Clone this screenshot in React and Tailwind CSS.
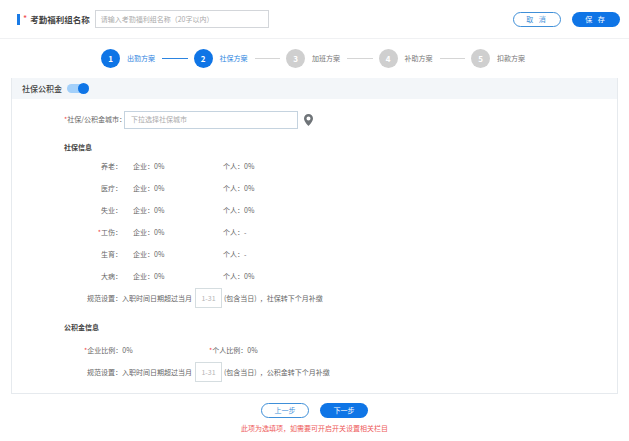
import React from 'react';

const font = { fontFamily: '"Noto Sans CJK SC", "Noto Sans", sans-serif' };

const steps = [
  { n: 1, label: '出勤方案', active: true, lineActive: true },
  { n: 2, label: '社保方案', active: true },
  { n: 3, label: '加班方案' },
  { n: 4, label: '补助方案' },
  { n: 5, label: '扣款方案' }
];

const rates = [
  { name: '养老', company: '0%', person: '0%' },
  { name: '医疗', company: '0%', person: '0%' },
  { name: '失业', company: '0%', person: '0%' },
  { name: '工伤', company: '0%', person: '-', required: true },
  { name: '生育', company: '0%', person: '-' },
  { name: '大病', company: '0%', person: '0%' }
];

function Rule({ tail }) {
  return (
    <div className="flex h-[22px] items-center pl-[75px] text-[7px] text-[#666]">
      <span className="w-[108px] whitespace-nowrap">规范设置：入职时间日期超过当月</span>
      <span className="flex h-[20px] w-[27px] items-center justify-center border border-[#d5dde0] text-[#b5b5b5]">1-31</span>
      <span className="ml-[2px] whitespace-nowrap">(包含当日)</span>
      <span className="ml-[3px] whitespace-nowrap">，{tail}</span>
    </div>
  );
}

export default function App() {
  return (
    <div style={font} className="h-[441px] w-[629px] overflow-hidden bg-white">
      {/* Top bar */}
      <div className="flex h-[39px] items-center border-b border-[#f0f1f3] pl-[17px] pr-[9px]">
        <span className="h-[11px] w-[3px] bg-[#1a7be6]"></span>
        <span className="ml-[3px] text-[9px] text-[#f04b4b]">*</span>
        <span className="ml-[3px] text-[8.5px] font-bold text-[#444]">考勤福利组名称</span>
        <div className="ml-[5px] flex h-[18px] w-[174px] items-center border border-[#d3d6da] pl-[5px] text-[7px] text-[#aaa]">
          请输入考勤福利组名称（20字以内）
        </div>
        <button className="ml-auto h-[15px] w-[48px] rounded-full border border-[#3f8fd8] text-[7px] tracking-[2px] text-[#3f8fd8]">取 消</button>
        <button className="ml-[11px] h-[15px] w-[48px] rounded-full bg-[#0f75e6] text-[7px] tracking-[2px] text-white">保 存</button>
      </div>

      {/* Stepper */}
      <div className="flex h-[39px] items-center pl-[101px]">
        {steps.map((s, i) => (
          <div key={s.n} className="flex items-center">
            <span className={`flex h-[19px] w-[19px] items-center justify-center rounded-full text-[8px] font-bold text-white ${s.active ? 'bg-[#0f75e6]' : 'bg-[#cfcfcf]'}`}>{s.n}</span>
            <span className={`ml-[7px] w-[29px] whitespace-nowrap text-[7px] ${s.active ? 'text-[#2c84e0]' : 'text-[#777]'}`}>{s.label}</span>
            {i < 4 && <span className={`mx-[6px] h-px w-[25.5px] ${s.lineActive ? 'bg-[#2c84e0]' : 'bg-[#d5d5d5]'}`}></span>}
          </div>
        ))}
      </div>

      {/* Panel */}
      <div className="mx-[11px] h-[316px] w-[607px] border border-t-0 border-[#e6eaee]">
        <div className="flex h-[21px] items-center bg-[#f3f6f9] pl-[10px]">
          <span className="text-[8px] font-medium text-[#444]">社保公积金</span>
          <span className="relative ml-[5px] h-[9px] w-[22px] rounded-full bg-[#a3d0fa]">
            <span className="absolute right-0 top-[-1px] h-[11px] w-[11px] rounded-full bg-[#0f75e6]"></span>
          </span>
        </div>

        <div className="flex h-[40px] items-center pt-[1px]">
          <span className="ml-[52px] w-[60px] whitespace-nowrap text-[7px] text-[#666]"><span className="text-[#f04b4b]">*</span>社保/公积金城市：</span>
          <div className="flex h-[18px] w-[174px] items-center border border-[#c5d3df] pl-[6px] text-[7px] text-[#aaa]">下拉选择社保城市</div>
          <svg className="ml-[6px]" width="9" height="12" viewBox="0 0 9 12">
            <path fillRule="evenodd" fill="#6f7478" d="M4.5 0A4.5 4.5 0 0 0 0 4.5C0 7.6 4.5 12 4.5 12S9 7.6 9 4.5A4.5 4.5 0 0 0 4.5 0Zm0 2.5a2 2 0 1 1 0 4 2 2 0 0 1 0-4Z" />
          </svg>
        </div>

        <div className="flex h-[16px] items-center pl-[52px] text-[7px] font-bold text-[#444]">社保信息</div>

        <div>
          {rates.map((r) => (
            <div key={r.name} className="flex h-[22px] items-center text-[7px] text-[#666]">
              <span className="w-[110px] text-right">
                {r.required && <span className="text-[#f04b4b]">*</span>}{r.name}：
              </span>
              <span className="ml-[11px] w-[90px]">企业：{r.company}</span>
              <span>个人：{r.person}</span>
            </div>
          ))}
        </div>

        <Rule tail="社保转下个月补缴" />

        <div className="flex h-[30px] items-center pl-[52px] pt-[6px] text-[7px] font-bold text-[#444]">公积金信息</div>

        <div className="flex h-[22px] items-center text-[7px] text-[#666]">
          <span className="ml-[72px] w-[125px]"><span className="text-[#f04b4b]">*</span>企业比例：0%</span>
          <span><span className="text-[#f04b4b]">*</span>个人比例：0%</span>
        </div>

        <Rule tail="公积金转下个月补缴" />
      </div>

      {/* Footer */}
      <div className="mt-[9px] flex justify-center gap-[11px]">
        <button className="h-[15px] w-[48px] rounded-full border border-[#3f8fd8] text-[7px] text-[#3f8fd8]">上一步</button>
        <button className="h-[15px] w-[48px] rounded-full bg-[#0f75e6] text-[7px] text-white">下一步</button>
      </div>
      <div className="mt-[5px] text-center text-[7px] text-[#ee5a5a]">此项为选填项，如需要可开启开关设置相关栏目</div>
    </div>
  );
}
